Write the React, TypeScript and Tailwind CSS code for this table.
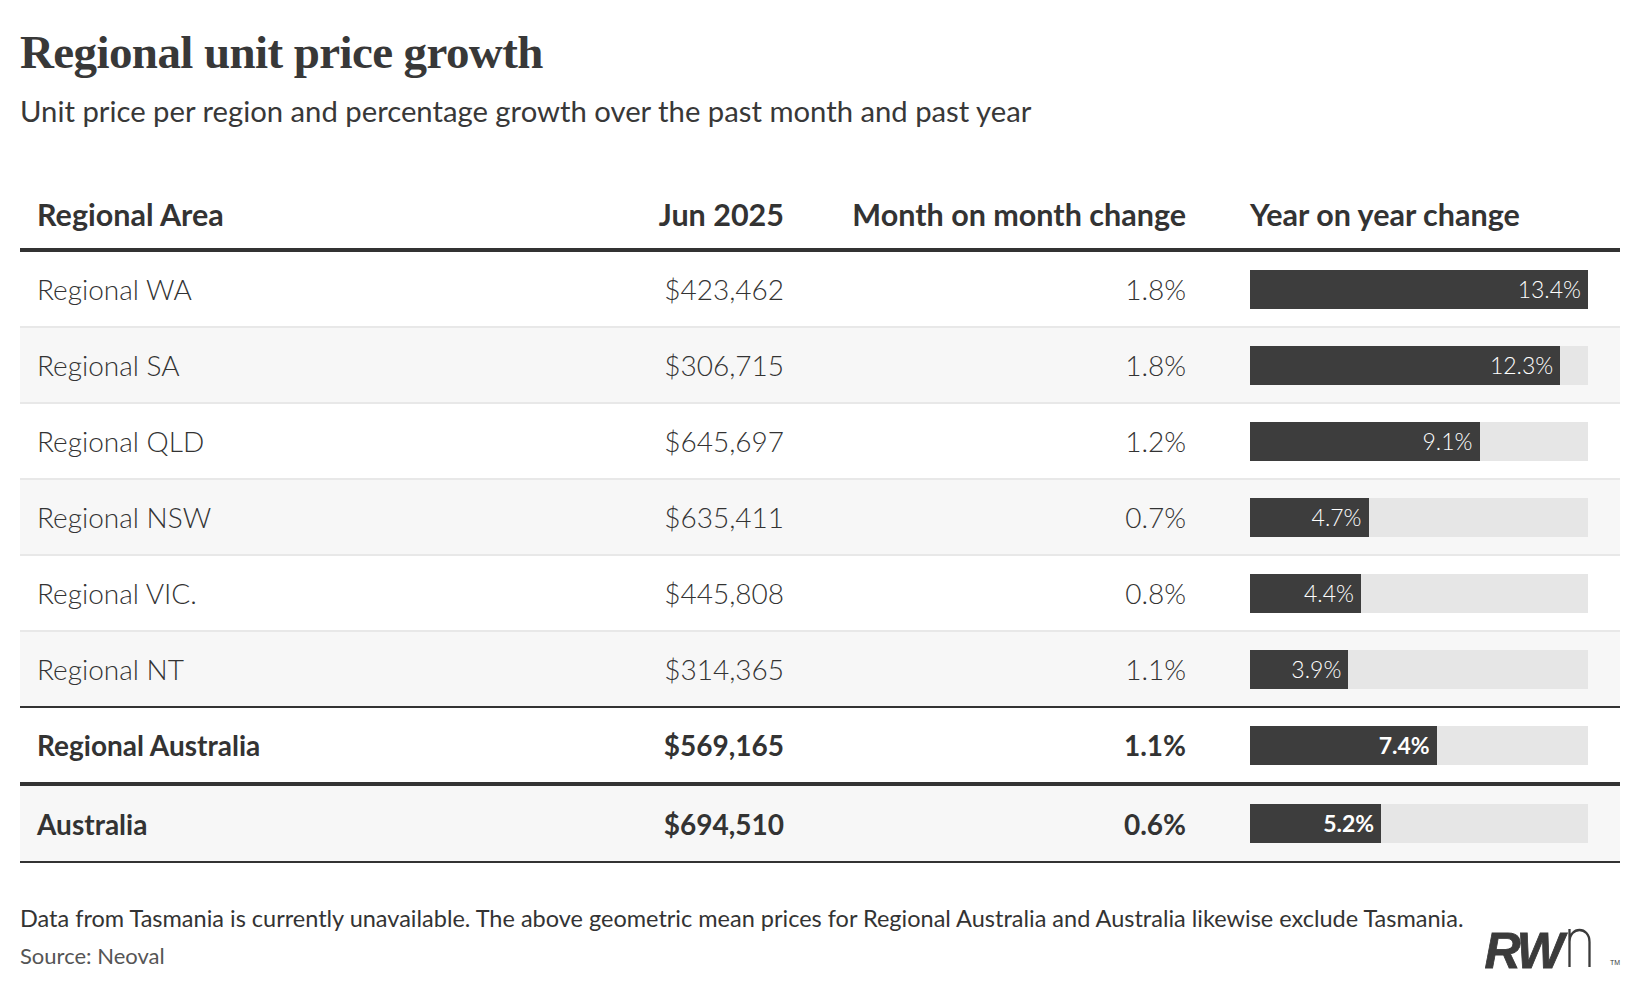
import React from "react";

type Row = { area: string; price: string; mom: string; yoy: number; bold?: boolean };

const rows: Row[] = [
  { area: "Regional WA", price: "$423,462", mom: "1.8%", yoy: 13.4 },
  { area: "Regional SA", price: "$306,715", mom: "1.8%", yoy: 12.3 },
  { area: "Regional QLD", price: "$645,697", mom: "1.2%", yoy: 9.1 },
  { area: "Regional NSW", price: "$635,411", mom: "0.7%", yoy: 4.7 },
  { area: "Regional VIC.", price: "$445,808", mom: "0.8%", yoy: 4.4 },
  { area: "Regional NT", price: "$314,365", mom: "1.1%", yoy: 3.9 },
];

const MAX = 13.4;

function Bar({ value, bold }: { value: number; bold?: boolean }) {
  return (
    <div className="h-[39px] w-[338px] bg-[#e6e6e6] flex">
      <div
        className="h-full bg-[#3d3d3d] flex items-center justify-end pr-[7px]"
        style={{ width: `${(value / MAX) * 100}%` }}
      >
        <span className={`text-white text-[23px] leading-none ${bold ? "font-bold" : "font-light"}`}>
          {value.toFixed(1)}%
        </span>
      </div>
    </div>
  );
}

function Cells({ r, bold }: { r: Row; bold?: boolean }) {
  const w = bold ? "font-bold" : "font-light";
  return (
    <>
      <div className={`w-[524px] pl-[17px] text-[28px] ${w}`}>{r.area}</div>
      <div className={`w-[240px] text-right text-[28px] ${w}`}>{r.price}</div>
      <div className={`w-[402px] text-right text-[28px] ${w}`}>{r.mom}</div>
      <div className="flex-1 pl-[64px]">
        <Bar value={r.yoy} bold={bold} />
      </div>
    </>
  );
}

export default function App() {
  return (
    <div
      className="w-[1640px] h-[988px] bg-white text-[#333] px-5 pt-[24px] overflow-hidden"
      style={{ fontFamily: "Lato, 'Open Sans', sans-serif" }}
    >
      <h1
        className="text-[47px] leading-[56px] font-bold tracking-[-0.6px] text-[#383838]"
        style={{ fontFamily: "'Liberation Serif', serif" }}
      >
        Regional unit price growth
      </h1>
      <p className="mt-[13px] text-[29.25px] leading-[36px] text-[#383838]">
        Unit price per region and percentage growth over the past month and past year
      </p>

      <div className="mt-[47px] w-[1600px]">
        <div className="flex items-center h-[76px] pt-[5px] border-b-4 border-[#333] text-[30.5px] font-bold">
          <div className="w-[524px] pl-[17px]">Regional Area</div>
          <div className="w-[240px] text-right">Jun 2025</div>
          <div className="w-[402px] text-right">Month on month change</div>
          <div className="flex-1 pl-[64px]">Year on year change</div>
        </div>
        {rows.map((r, i) => (
          <div
            key={r.area}
            className={`flex items-center ${i < 5 ? "h-[76px] border-b-2 border-[#e8e8e8]" : "h-[74px]"} ${
              i % 2 === 1 ? "bg-[#f7f7f7]" : "bg-white"
            }`}
          >
            <Cells r={r} />
          </div>
        ))}
        <div className="flex items-center h-[80px] border-t-2 border-[#333] border-b-4 bg-white">
          <Cells r={{ area: "Regional Australia", price: "$569,165", mom: "1.1%", yoy: 7.4 }} bold />
        </div>
        <div className="flex items-center h-[77px] border-b-2 border-[#333] bg-[#f7f7f7]">
          <Cells r={{ area: "Australia", price: "$694,510", mom: "0.6%", yoy: 5.2 }} bold />
        </div>
      </div>

      <div className="mt-[40px] w-[1600px] flex items-end justify-between">
        <div>
          <p className="text-[23.5px] leading-[30px] text-[#333]">
            Data from Tasmania is currently unavailable. The above geometric mean prices for Regional Australia and
            Australia likewise exclude Tasmania.
          </p>
          <p className="mt-[8px] text-[22px] leading-[30px] text-[#555]">Source: Neoval</p>
        </div>
        <div className="flex items-end mb-[4px] text-[#3b3b3b]">
          <span
            className="text-[50px] leading-none font-bold italic tracking-[-3px] -mb-[9px]"
            style={{ fontFamily: "'Liberation Sans', Arial, sans-serif", WebkitTextStroke: "0.8px #3b3b3b" }}
          >
            RW
          </span>
          <svg width="25" height="39" viewBox="0 0 25 39" className="ml-[6px]">
            <path d="M2.5 39 V1 M2.5 14 C2.5 6 7.5 2 12.5 2 C17.5 2 22.5 6 22.5 14 V39" fill="none" stroke="#3b3b3b" strokeWidth="2.3" />
          </svg>
          <span className="text-[7px] leading-none ml-[18px] mb-[1px]" style={{ fontFamily: "'Liberation Sans', sans-serif" }}>
            TM
          </span>
        </div>
      </div>
    </div>
  );
}
